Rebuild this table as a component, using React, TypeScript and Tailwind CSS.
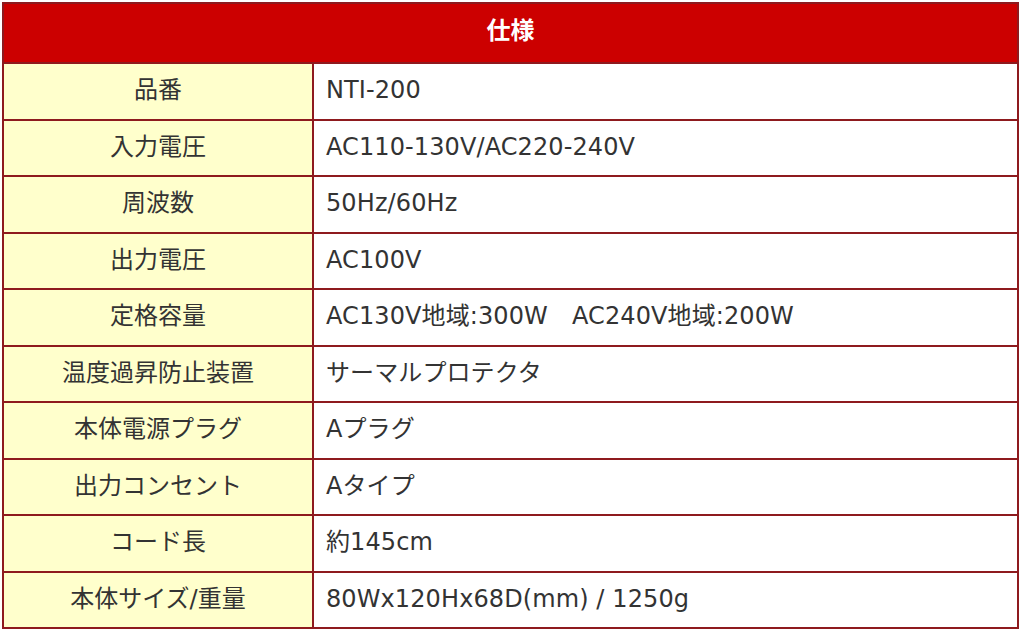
import React from "react";

const rows: [string, string][] = [
  ["品番", "NTI-200"],
  ["入力電圧", "AC110-130V/AC220-240V"],
  ["周波数", "50Hz/60Hz"],
  ["出力電圧", "AC100V"],
  ["定格容量", "AC130V地域:300W\u3000AC240V地域:200W"],
  ["温度過昇防止装置", "サーマルプロテクタ"],
  ["本体電源プラグ", "Aプラグ"],
  ["出力コンセント", "Aタイプ"],
  ["コード長", "約145cm"],
  ["本体サイズ/重量", "80Wx120Hx68D(mm) / 1250g"],
];

export default function App() {
  return (
    <div className="w-[1024px] h-[631px] bg-white overflow-hidden pt-[2px] pl-[2px]">
      <div
        className="w-[1017px] border-2 border-[#8e1a1e] text-[24px] text-[#333333]"
        style={{ fontFamily: '"DejaVu Sans", "Noto Sans CJK JP", sans-serif' }}
      >
        <div className="h-[58px] bg-[#cc0000] flex items-center justify-center text-white font-bold pb-[4px]">
          仕様
        </div>
        {rows.map(([k, v]) => (
          <div key={k} className="h-[56.5px] border-t-2 border-[#8e1a1e] flex">
            <div className="w-[310px] shrink-0 border-r-2 border-[#8e1a1e] bg-[#ffffcc] flex items-center justify-center pb-[2px]">
              {k}
            </div>
            <div className="flex-1 bg-white flex items-center pl-[12px] pb-[2px] whitespace-pre tracking-[0.1px]">
              {v}
            </div>
          </div>
        ))}
      </div>
    </div>
  );
}
